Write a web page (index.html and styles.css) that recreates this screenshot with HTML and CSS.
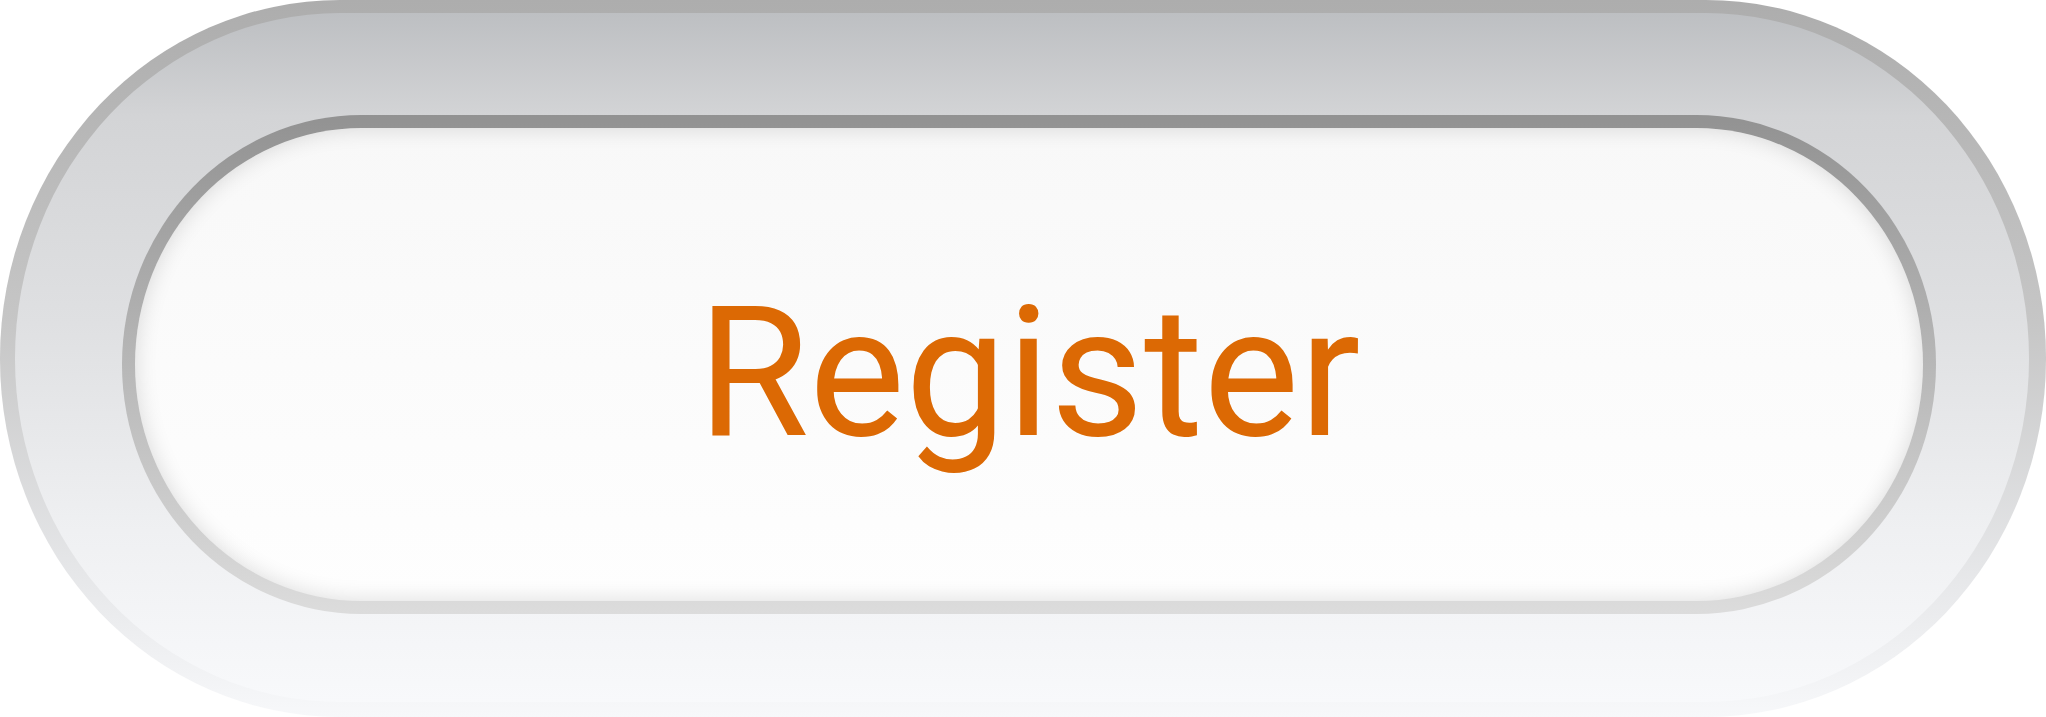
FILE: index.html
```html
<!DOCTYPE html>
<html lang="en">
<head>
<meta charset="utf-8">
<title>Register</title>
<link rel="stylesheet" href="styles.css">
</head>
<body>
<div class="frame">
  <button class="btn" type="button"><span class="label">Register</span></button>
</div>
</body>
</html>
```

FILE: styles.css
```css
html, body {
  margin: 0;
  padding: 0;
  background: #ffffff;
}

.frame {
  box-sizing: border-box;
  width: 2046px;
  height: 717px;
  display: flex;
  padding: 102px 93px 88px 107px;
  border-style: solid;
  border-color: transparent;
  border-width: 13px 17px 15px 15px;
  border-radius: 340px / 358px;
  background:
    linear-gradient(to bottom, #bdbfc2 0%, #d3d4d6 15%, #dfe0e2 45%, #eff0f2 75%, #f8f9fb 100%) padding-box,
    linear-gradient(to bottom, #adadad 0%, #c6c6c6 45%, #e6e7e9 80%, #f7f8fa 100%) border-box;
}

.btn {
  flex: 1;
  margin: 0;
  display: flex;
  align-items: center;
  justify-content: center;
  box-sizing: border-box;
  border-style: solid;
  border-color: transparent;
  border-width: 13px;
  border-radius: 240px / 250px;
  background:
    linear-gradient(to bottom, #f8f8f8 0%, #fbfbfb 50%, #fefefe 100%) padding-box,
    linear-gradient(to bottom, #929292 0%, #b7b7b7 50%, #dcdcdc 100%) border-box;
  box-shadow: inset 0 0 22px rgba(0, 0, 0, 0.14);
  cursor: pointer;
  padding: 0;
}

.label {
  font-family: Roboto, "Open Sans", sans-serif;
  font-size: 181px;
  line-height: 1;
  padding-top: 18px;
  color: #dc6904;
  font-weight: 400;
}
```
